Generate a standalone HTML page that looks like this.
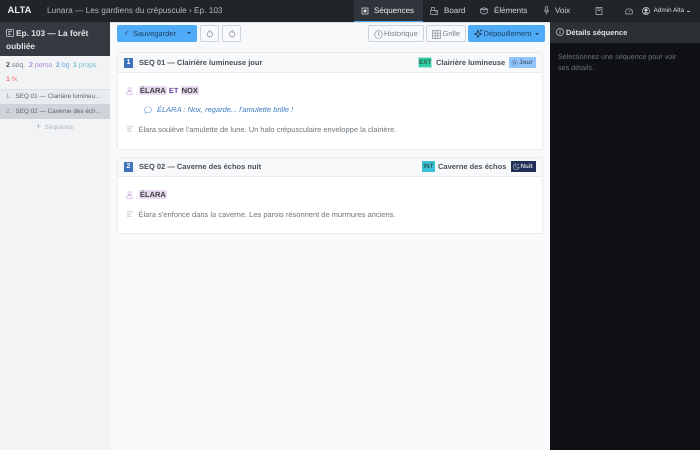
<!DOCTYPE html>
<html><head><meta charset="utf-8"><style>
*{box-sizing:border-box}
html,body{margin:0;padding:0}
body{width:700px;height:450px;overflow:hidden;position:relative;background:#f8f9fa;font-family:"Liberation Sans",sans-serif;text-rendering:geometricPrecision;filter:blur(.25px)}
.a{position:absolute;white-space:nowrap}
svg{position:absolute;fill:none;stroke:currentColor;stroke-width:.7}
.nav{color:#ced4da;font-size:8px;line-height:10px}
.btn{position:absolute;border:1px solid #ced4da;border-radius:2px;background:#f8f9fa;color:#7a828a;font-size:7.5px;line-height:15px;white-space:nowrap}
.blue{position:absolute;background:#4dabf7;color:#1f3a5f;font-size:7.5px;line-height:17px;white-space:nowrap;border-radius:2px}
.card{position:absolute;left:117px;width:426px;background:#fff;border:1px solid #e9ecef;border-radius:3px}
.chead{position:absolute;left:0;top:0;right:0;background:#f8f9fa;border-bottom:1px solid #e9ecef;border-radius:3px 3px 0 0}
.num{position:absolute;background:#3f74ba;color:#fff;font-size:7px;font-weight:bold;text-align:center;width:9px;height:10px;line-height:10px}
.t{font-size:7.5px;font-weight:bold;color:#495057;line-height:10px}
.hl{background:#e8daef;color:#343a40;font-weight:bold;padding:0 1px}
.p{font-size:7.5px;color:#6c757d;line-height:10px}
</style></head><body>
<!-- navbar -->
<div class="a" style="left:0;top:0;width:700px;height:22px;background:#212529"></div>
<div class="a" style="left:7.500px;top:5px;font-size:9.500px;font-weight:bold;color:#e9ecef;line-height:12px">ALTA</div>
<div class="a" style="left:47px;top:6px;font-size:8.280px;color:#adb5bd;line-height:10px">Lunara — Les gardiens du crépuscule › Ep. 103</div>
<div class="a" style="left:354px;top:0;width:69px;height:22px;background:#2f343a;border-bottom:1px solid #4dabf7"></div>
<svg style="left:361px;top:6.500px;color:#e9ecef" width="8" height="8" viewBox="0 0 8 8"><rect x="1" y="1" width="6" height="6"/><path d="M3 3h2v2H3z" fill="currentColor"/></svg>
<div class="a nav" style="left:374px;top:6px;color:#e9ecef">Séquences</div>
<svg style="left:430px;top:6.500px;color:#adb5bd" width="8" height="8" viewBox="0 0 8 8"><path d="M.5 3.500h7v4h-7zM1.500 3.500v-3h3v3M5 5h2.500"/></svg>
<div class="a nav" style="left:444px;top:6px">Board</div>
<svg style="left:480px;top:6.500px;color:#adb5bd" width="8" height="8" viewBox="0 0 8 8"><path d="M.5 2L4 .8 7.500 2v3.500L4 7.200.5 5.500zM.5 2.500h7M4 2.500v2"/></svg>
<div class="a nav" style="left:494px;top:6px">Éléments</div>
<svg style="left:543px;top:6px;color:#adb5bd" width="7" height="9" viewBox="0 0 7 9"><rect x="2.500" y=".5" width="2" height="4.500" rx="1"/><path d="M1.500 4c0 3 4 3 4 0M3.500 6.500V8.500"/></svg>
<div class="a nav" style="left:555px;top:6px">Voix</div>
<svg style="left:595px;top:6.500px;color:#adb5bd" width="8" height="8" viewBox="0 0 8 8"><path d="M1 .5h6v7H1zM3 .5v3h2v-3"/></svg>
<svg style="left:625px;top:7.500px;color:#adb5bd" width="8" height="7" viewBox="0 0 8 7"><path d="M1 6C-.5 3 1.500.8 4 .8S8.500 3 7 6zM4 4l1.500-1.500"/></svg>
<svg style="left:642px;top:7px;color:#ced4da" width="8" height="8" viewBox="0 0 8 8"><circle cx="4" cy="4" r="3.500"/><circle cx="4" cy="3" r="1.200" fill="currentColor"/><path d="M2 6.500c1-1.500 3-1.500 4 0" fill="currentColor"/></svg>
<div class="a" style="left:653.500px;top:6px;font-size:6.400px;color:#ced4da;line-height:10px">Admin Alta</div>
<div class="a" style="left:687px;top:11px;width:3px;height:1px;background:#adb5bd"></div>

<!-- sidebar -->
<div class="a" style="left:0;top:22px;width:110px;height:428px;background:#f1f3f5"></div>
<div class="a" style="left:0;top:22px;width:110px;height:34px;background:#343a40"></div>
<svg style="left:6px;top:29px;color:#ced4da" width="8" height="8" viewBox="0 0 8 8"><rect x=".5" y=".5" width="7" height="7" rx="1"/><path d="M2 2.500h4M2 4h2M2 5.500h3"/></svg>
<div class="a" style="left:6px;top:27px;width:100px;font-size:8.300px;font-weight:bold;color:#dee2e6;line-height:13px;white-space:normal;text-indent:10px">Ep. 103 — La forêt oubliée</div>
<div class="a" style="left:6px;top:61px;font-size:7px;line-height:9px;color:#7a828a"><b style="color:#495057">2</b> séq.</div>
<div class="a" style="left:29px;top:61px;font-size:7px;line-height:9px;color:#a98ad0"><b>2</b> perso</div>
<div class="a" style="left:56px;top:61px;font-size:7px;line-height:9px;color:#74aee0"><b>2</b> bg</div>
<div class="a" style="left:73px;top:61px;font-size:7px;line-height:9px;color:#75bfcf"><b>1</b> props</div>
<div class="a" style="left:6px;top:75px;font-size:7px;line-height:9px;color:#f47c82"><b>1</b> fx</div>
<div class="a" style="left:0;top:89px;width:110px;height:15px;background:#e9ecef;border-top:1px solid #dee2e6"></div>
<div class="a" style="left:0;top:104px;width:110px;height:15px;background:#ced4da"></div>
<div class="a" style="left:6px;top:92px;font-size:6.300px;line-height:9px;color:#868e96">1.</div>
<div class="a" style="left:15.500px;top:92px;font-size:6.350px;line-height:9px;color:#5c636a">SEQ 01 — Clairière lumineu...</div>
<div class="a" style="left:6px;top:107px;font-size:6.300px;line-height:9px;color:#868e96">2.</div>
<div class="a" style="left:15.500px;top:107px;font-size:6.350px;line-height:9px;color:#5c636a">SEQ 02 — Caverne des éch...</div>
<div class="a" style="left:36px;top:121px;font-size:9px;line-height:10px;color:#adb5bd">+</div>
<div class="a" style="left:44.500px;top:123px;font-size:6.500px;line-height:9px;color:#adb5bd">Séquence</div>

<!-- toolbar -->
<div class="a" style="left:110px;top:22px;width:440px;height:24px;background:#f8f9fa;border-top:1px solid #dee2e6"></div>
<div class="blue" style="left:117px;top:25px;width:64px;height:17px;border-radius:2px 0 0 2px"><span class="a" style="left:7px;top:-.500px;font-size:7px">✓</span><span class="a" style="left:16px;top:0">Sauvegarder</span></div>
<div class="blue" style="left:181px;top:25px;width:16px;height:17px;border-radius:0 2px 2px 0"><span class="a" style="left:6px;top:7px;width:0;height:0;border:2px solid transparent;border-top:2.500px solid #1f3a5f"></span></div>
<div class="btn" style="left:200px;top:25px;width:19px;height:17px"><svg style="left:5px;top:4px;color:#868e96" width="8" height="8" viewBox="0 0 8 8"><path d="M2 2.200a2.700 2.700 0 1 0 2-.7M4 .2L2.600 1.500 4 2.800"/></svg></div>
<div class="btn" style="left:222px;top:25px;width:19px;height:17px"><svg style="left:5px;top:4px;color:#868e96" width="8" height="8" viewBox="0 0 8 8"><path d="M6 2.200a2.700 2.700 0 1 1-2-.7M4 .2l1.400 1.300L4 2.800"/></svg></div>
<div class="btn" style="left:368px;top:25px;width:56px;height:17px"><svg style="left:5px;top:3.500px;color:#868e96" width="9" height="9" viewBox="0 0 9 9"><circle cx="4.500" cy="4.500" r="3.800"/><path d="M4.500 2.200v2.500l1.500 1"/></svg><span class="a" style="left:15px;top:0">Historique</span></div>
<div class="btn" style="left:426px;top:25px;width:40px;height:17px"><svg style="left:5px;top:3.500px;color:#868e96" width="9" height="9" viewBox="0 0 9 9"><rect x=".5" y=".5" width="8" height="8"/><path d="M.5 3.200h8M.5 5.800h8M3.200.5v8M5.800.5v8"/></svg><span class="a" style="left:15.500px;top:0">Grille</span></div>
<div class="blue" style="left:468px;top:25px;width:77px;height:17px"><svg style="left:6px;top:4px;color:#1f2d3d" width="9" height="9" viewBox="0 0 9 9"><path d="M4 1.500L5 4 7.500 5 5 6 4 8.500 3 6 .5 5 3 4zM7 .5v2M6 1.500h2" stroke-width=".8"/></svg><span class="a" style="left:15.500px;top:0">Dépouillement</span><span class="a" style="left:67px;top:7.500px;width:0;height:0;border:2px solid transparent;border-top:2.500px solid #1f3a5f"></span></div>

<!-- main -->
<div class="a" style="left:110px;top:46px;width:440px;height:404px;background:#f8f9fa"></div>

<div class="card" style="top:52px;height:98px">
<div class="chead" style="height:20px"></div>
<div class="num" style="left:6px;top:5px">1</div>
<div class="a t" style="left:21px;top:5px">SEQ 01 — Clairière lumineuse jour</div>
<div class="a" style="left:300px;top:4px;width:14px;height:11px;background:#2fd0a5;color:#2d5a4e;border:1px solid #b5e5d8;font-size:6.300px;font-weight:bold;line-height:9px;text-align:center">EXT</div>
<div class="a t" style="left:318px;top:5px">Clairière lumineuse</div>
<div class="a" style="left:391px;top:4px;width:27px;height:11px;background:#91c5fb;color:#4a6788;font-size:6.300px;font-weight:bold;line-height:11px;padding-left:10px">Jour</div>
<svg style="left:393px;top:6px;color:#4a6788" width="7" height="7" viewBox="0 0 7 7"><circle cx="3.500" cy="3.500" r="1.500" stroke-width=".6"/><path d="M3.500 0v1.200M3.500 5.800V7M0 3.500h1.200M5.800 3.500H7M1 1l.8.8M5.200 5.200l.8.8M1 6l.8-.8M5.200 1.800L6 1" stroke-width=".5"/></svg>
<svg style="left:8px;top:34px;color:#c9a9dc" width="7" height="8" viewBox="0 0 7 8"><circle cx="3.500" cy="2.200" r="1.500"/><path d="M.8 7.300V6c0-1 1-1.500 2.700-1.500s2.700.5 2.700 1.500v1.300z"/></svg>
<div class="a" style="left:21px;top:32.500px;font-size:7.500px;line-height:10px;color:#5f3d99;font-weight:bold"><span class="hl">ÉLARA</span> ET <span class="hl">NOX</span></div>
<svg style="left:26px;top:53px;color:#7aa5d6" width="8" height="8" viewBox="0 0 8 8"><path d="M4 .8c2 0 3.400 1.200 3.400 3S6 6.800 4 6.800c-.5 0-1 0-1.400-.2L1 7.300l.4-1.500C.8 5.200.6 4.500.6 3.800.6 2 2 .8 4 .8z"/></svg>
<div class="a" style="left:39px;top:52px;font-size:7.500px;line-height:10px;font-style:italic;color:#3f7cc4">ÉLARA : Nox, regarde... l'amulette brille !</div>
<svg style="left:9px;top:73px;color:#adb5bd" width="6" height="6" viewBox="0 0 6 6"><path d="M0 .8h6M0 3h4M0 5.200h5"/></svg>
<div class="a p" style="left:20.500px;top:71.500px">Élara soulève l'amulette de lune. Un halo crépusculaire enveloppe la clairière.</div>
</div>

<div class="card" style="top:157px;height:77px">
<div class="chead" style="height:19px"></div>
<div class="num" style="left:6px;top:4px">2</div>
<div class="a t" style="left:21px;top:4px">SEQ 02 — Caverne des échos nuit</div>
<div class="a" style="left:304px;top:3px;width:13px;height:11px;background:#3bc2d6;color:#2a5a63;font-size:6.300px;font-weight:bold;line-height:11px;text-align:center">INT</div>
<div class="a t" style="left:320px;top:4px">Caverne des échos</div>
<div class="a" style="left:393px;top:3px;width:25px;height:11px;background:#1f2f55;color:#ced4da;font-size:6.300px;font-weight:bold;line-height:11px;padding-left:9.500px">Nuit</div>
<svg style="left:395px;top:5px;color:#adb5bd" width="7" height="7" viewBox="0 0 7 7"><path d="M2.500.7A3 3 0 1 0 6.300 4.500 3 3 0 0 1 2.500.7zM5 .7v2M4 1.700h2" stroke-width=".6"/></svg>
<svg style="left:8px;top:33px;color:#c9a9dc" width="7" height="8" viewBox="0 0 7 8"><circle cx="3.500" cy="2.200" r="1.500"/><path d="M.8 7.300V6c0-1 1-1.500 2.700-1.500s2.700.5 2.700 1.500v1.300z"/></svg>
<div class="a" style="left:21px;top:31.500px;font-size:7.500px;line-height:10px"><span class="hl">ÉLARA</span></div>
<svg style="left:9px;top:53px;color:#adb5bd" width="6" height="6" viewBox="0 0 6 6"><path d="M0 .8h6M0 3h4M0 5.200h5"/></svg>
<div class="a p" style="left:20.500px;top:51.500px">Élara s'enfonce dans la caverne. Les parois résonnent de murmures anciens.</div>
</div>

<!-- right panel -->
<div class="a" style="left:550px;top:22px;width:150px;height:428px;background:#0f1115"></div>
<div class="a" style="left:550px;top:22px;width:150px;height:21px;background:#2b3035"></div>
<svg style="left:556px;top:28px;color:#ced4da" width="8" height="8" viewBox="0 0 8 8"><circle cx="4" cy="4" r="3.500"/><path d="M4 3.500v2.500M4 2v1"/></svg>
<div class="a" style="left:566px;top:27.500px;font-size:7.500px;font-weight:bold;color:#dee2e6;line-height:10px">Détails séquence</div>
<div class="a" style="left:558px;top:51px;width:126px;font-size:7.200px;line-height:11px;color:#6c757d;white-space:normal">Sélectionnez une séquence pour voir ses détails.</div>
</body></html>
